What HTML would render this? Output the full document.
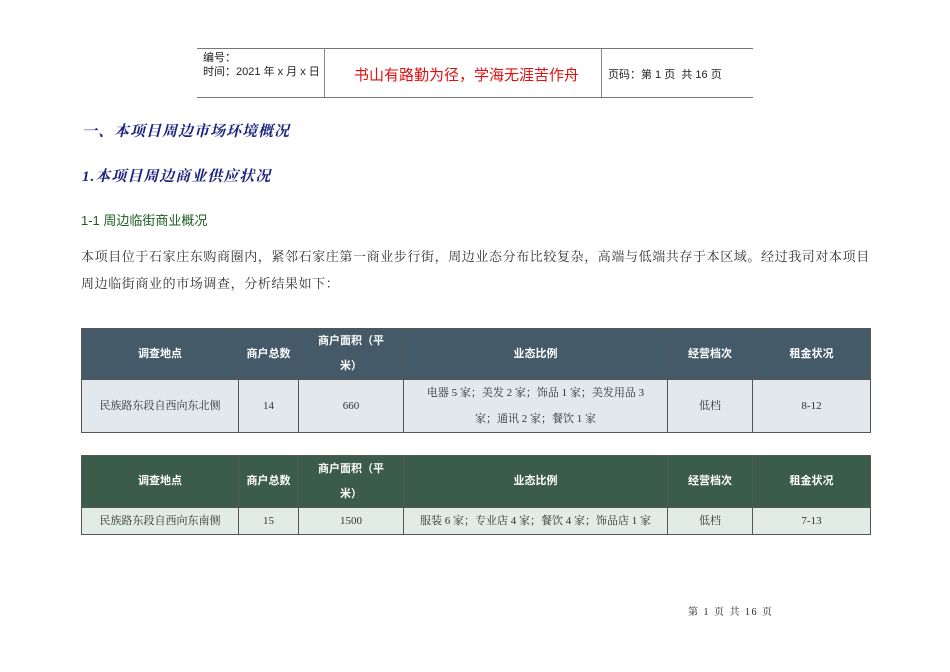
<!DOCTYPE html>
<html><head><meta charset="utf-8"><style>
body{margin:0;background:#fff;width:950px;height:672px;position:relative;overflow:hidden;font-family:"Liberation Serif","Noto Serif CJK SC",serif;color:#333}
.a{position:absolute;white-space:nowrap}
.hdr{position:absolute;left:197px;top:48px;width:556px;height:48px;border-top:1px solid #777;border-bottom:1px solid #777;font-family:"Liberation Sans","Noto Sans CJK SC",sans-serif}
.hdr div{position:absolute}
table{position:absolute;left:81px;border-collapse:collapse;font-size:11px;text-align:center;table-layout:fixed}
td{border:1px solid #555;padding:0;line-height:26px}
th{font-family:"Liberation Sans","Noto Sans CJK SC",sans-serif;font-weight:bold;color:#fff;font-size:11px;border:1px solid #555;line-height:25px;padding:0}
.t1 th{background:#455a69}.t1 td{background:#e3e8ec}
.t2 th{background:#3b5b4b}.t2 td{background:#e1ece6}
</style></head><body>
<div class="hdr">
<div style="left:6px;top:2px;font-size:11px;line-height:14px;color:#222">编号：<br>时间：2021 年 x 月 x 日</div>
<div style="left:127px;top:0;width:1px;height:48px;background:#888"></div>
<div style="left:157px;top:15px;font-size:15px;color:#e01010;font-family:'Noto Sans CJK SC',sans-serif">书山有路勤为径，学海无涯苦作舟</div>
<div style="left:404px;top:0;width:1px;height:48px;background:#888"></div>
<div style="left:411px;top:17px;font-size:11px;color:#222">页码：第 1 页 &nbsp;共 16 页</div>
</div>
<div class="a" style="left:82px;top:120px;font-size:15px;letter-spacing:1px;font-weight:bold;font-style:italic;color:#1a237e">一、本项目周边市场环境概况</div>
<div class="a" style="left:82px;top:165px;font-size:15px;letter-spacing:1px;font-weight:bold;font-style:italic;color:#1a237e">1.本项目周边商业供应状况</div>
<div class="a" style="left:81px;top:210px;font-size:13px;color:#1b5e20;font-family:'Liberation Sans','Noto Sans CJK SC',sans-serif">1-1 周边临街商业概况</div>
<div class="a" style="left:81px;top:243px;font-size:13px;letter-spacing:0.6px;line-height:27px;color:#333">本项目位于石家庄东购商圈内，紧邻石家庄第一商业步行街，周边业态分布比较复杂，高端与低端共存于本区域。经过我司对本项目<br>周边临街商业的市场调查，分析结果如下：</div>
<table class="t1" style="top:328px;width:789px">
<colgroup><col style="width:157px"><col style="width:60px"><col style="width:105px"><col style="width:264px"><col style="width:85px"><col style="width:118px"></colgroup>
<tr style="height:51px"><th>调查地点</th><th>商户总数</th><th>商户面积（平<br>米）</th><th>业态比例</th><th>经营档次</th><th>租金状况</th></tr>
<tr style="height:52px"><td>民族路东段自西向东北侧</td><td>14</td><td>660</td><td>电器 5 家；美发 2 家；饰品 1 家；美发用品 3<br>家；通讯 2 家；餐饮 1 家</td><td>低档</td><td>8-12</td></tr>
</table>
<table class="t2" style="top:455px;width:789px">
<colgroup><col style="width:157px"><col style="width:60px"><col style="width:105px"><col style="width:264px"><col style="width:85px"><col style="width:118px"></colgroup>
<tr style="height:52px"><th>调查地点</th><th>商户总数</th><th>商户面积（平<br>米）</th><th>业态比例</th><th>经营档次</th><th>租金状况</th></tr>
<tr style="height:25px"><td>民族路东段自西向东南侧</td><td>15</td><td>1500</td><td>服装 6 家；专业店 4 家；餐饮 4 家；饰品店 1 家</td><td>低档</td><td>7-13</td></tr>
</table>
<div class="a" style="left:688px;top:603px;font-size:10px;letter-spacing:1.5px;color:#222">第 1 页 共 16 页</div>
</body></html>
